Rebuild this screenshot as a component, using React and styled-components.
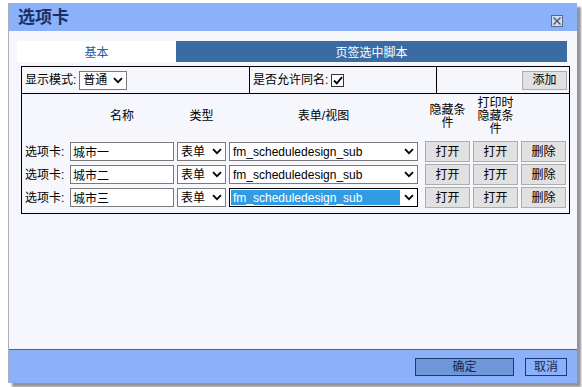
import React from "react";
import styled, { createGlobalStyle } from "styled-components";

const Global = createGlobalStyle`
  html, body { margin: 0; padding: 0; }
  body {
    background: #ffffff;
    font-family: "Liberation Sans", "Noto Sans CJK SC", sans-serif;
    font-size: 12px;
    color: #000;
  }
`;

const Page = styled.div`
  width: 582px;
  height: 387px;
  box-sizing: border-box;
  padding: 3px 0 0 8px;
  overflow: hidden;
`;

const Dialog = styled.div`
  width: 569px;
  height: 380px;
  display: flex;
  flex-direction: column;
  box-sizing: border-box;
  border-left: 1px solid #a9b0bc;
  box-shadow: 4px 4px 2px rgba(60, 60, 70, 0.55);
`;

const TitleBar = styled.div`
  height: 28px;
  flex: none;
  background: #8ab1f9;
  display: flex;
  align-items: center;
  justify-content: space-between;
  padding: 0 14px 0 9px;
`;

const Title = styled.div`
  font-family: "Noto Sans CJK SC", sans-serif;
  font-size: 17px;
  font-weight: 700;
  line-height: 20px;
  color: #1e2f62;
  margin-top: -2px;
`;

const CloseBox = styled.div`
  width: 10px;
  height: 10px;
  border: 1px solid #5d6a86;
  background: #cfdcf6;
  display: flex;
  align-items: center;
  justify-content: center;
  margin-top: 8px;
`;

const Body = styled.div`
  flex: 1;
  background: #f5f7fc;
  padding: 10px 0 0 8px;
`;

const Tabs = styled.div`
  display: flex;
  width: 550px;
  height: 21px;
`;

const Tab = styled.div`
  width: ${(p) => p.$w}px;
  flex: ${(p) => (p.$w ? "none" : "1")};
  background: ${(p) => (p.$active ? "#ffffff" : "#3a6ca3")};
  color: ${(p) => (p.$active ? "#2d5c9e" : "#ffffff")};
  display: flex;
  align-items: center;
  justify-content: center;
  line-height: 14px;
  font-family: "Noto Sans CJK SC", sans-serif;
`;

const Panel = styled.div`
  margin: 4px 0 0 4px;
  width: 549px;
  box-sizing: border-box;
  border: 1px solid #000;
`;

const TopRow = styled.div`
  display: grid;
  grid-template-columns: 228px 187px 1fr;
  height: 26px;
  border-bottom: 1px solid #000;
`;

const TopCell = styled.div`
  display: flex;
  align-items: center;
  justify-content: ${(p) => (p.$right ? "flex-end" : "flex-start")};
  padding: 0 ${(p) => (p.$right ? "2px" : "0")} 0 3px;
  border-right: ${(p) => (p.$last ? "none" : "1px solid #000")};
  line-height: 14px;
  gap: 3px;
`;

const Grid = styled.div`
  display: grid;
  grid-template-columns: 42px 104px 49px 189px 1px 45px 45px 45px;
  grid-template-rows: 45px repeat(3, 21px);
  column-gap: 3px;
  row-gap: 2px;
  padding: 0 0 5px 3px;
  align-items: center;
`;

const Head = styled.div`
  text-align: center;
  line-height: 13px;
  grid-column: ${(p) => p.$col};
`;

const Label = styled.div`
  line-height: 14px;
  white-space: nowrap;
`;

const TextInput = styled.input`
  box-sizing: border-box;
  width: 100%;
  height: 19px;
  border: 1px solid #7a7a7a;
  background: #fff;
  padding: 0 2px;
  font: inherit;
  font-size: 12px;
  outline: none;
`;

const SelectBox = styled.div`
  box-sizing: border-box;
  width: ${(p) => (p.$w ? `${p.$w}px` : "100%")};
  height: 19px;
  border: 1px solid ${(p) => (p.$focus ? "#000" : "#7a7a7a")};
  background: #fff;
  display: flex;
  align-items: center;
  padding: 1px 3px 1px 1px;
  gap: 4px;
`;

const SelectText = styled.div`
  flex: 1;
  height: 100%;
  display: flex;
  align-items: center;
  padding-left: 2px;
  white-space: nowrap;
  overflow: hidden;
  line-height: 14px;
  background: ${(p) => (p.$focus ? "#319be4" : "transparent")};
  color: ${(p) => (p.$focus ? "#fff" : "#000")};
`;

const GreyButton = styled.button`
  box-sizing: border-box;
  width: ${(p) => (p.$w ? `${p.$w}px` : "100%")};
  height: ${(p) => p.$h || 21}px;
  border: 1px solid #adadad;
  background: #e1e1e1;
  font: inherit;
  font-size: 12px;
  line-height: 14px;
  color: #000;
  padding: 0;
  cursor: pointer;
`;

const Check = styled.div`
  width: 11px;
  height: 11px;
  border: 1px solid #333;
  background: #fff;
  display: flex;
  align-items: center;
  justify-content: center;
`;

const Footer = styled.div`
  height: 33px;
  flex: none;
  border-top: 1px solid #44678f;
  background: #8ab1f9;
  display: flex;
  align-items: center;
  justify-content: flex-end;
  padding-right: 10px;
  gap: 11px;
`;

const FootButton = styled.button`
  box-sizing: border-box;
  width: ${(p) => p.$w}px;
  height: 18px;
  border: 1px solid #1e3a6e;
  background: ${(p) => (p.$primary ? "#6e98da" : "#8ab1f9")};
  color: #17264a;
  font: inherit;
  font-size: 12px;
  line-height: 14px;
  padding: 0;
  margin-top: 1px;
`;

const Chevron = () => (
  <svg width="10" height="7" viewBox="0 0 10 7">
    <path d="M1 1.2 L5 5.2 L9 1.2" fill="none" stroke="#000" strokeWidth="1.8" />
  </svg>
);

const Select = ({ value, w, focus }) => (
  <SelectBox $w={w} $focus={focus}>
    <SelectText $focus={focus}>{value}</SelectText>
    <Chevron />
  </SelectBox>
);

const rows = ["城市一", "城市二", "城市三"];

export default function App() {
  return (
    <>
      <Global />
      <Page>
        <Dialog>
          <TitleBar>
            <Title>选项卡</Title>
            <CloseBox>
              <svg width="8" height="8" viewBox="0 0 8 8">
                <path d="M0.5 0.5 L7.5 7.5 M7.5 0.5 L0.5 7.5" stroke="#4a4f5c" strokeWidth="1.3" />
              </svg>
            </CloseBox>
          </TitleBar>
          <Body>
            <Tabs>
              <Tab $active $w={159}>基本</Tab>
              <Tab>页签选中脚本</Tab>
            </Tabs>
            <Panel>
              <TopRow>
                <TopCell>
                  显示模式:
                  <Select value="普通" w={48} />
                </TopCell>
                <TopCell>
                  是否允许同名:
                  <Check>
                    <svg width="10" height="9" viewBox="0 0 10 9">
                      <path d="M1 4.5 L3.8 7.3 L9 1.2" fill="none" stroke="#000" strokeWidth="1.8" />
                    </svg>
                  </Check>
                </TopCell>
                <TopCell $right $last>
                  <GreyButton $w={45} $h={19}>添加</GreyButton>
                </TopCell>
              </TopRow>
              <Grid>
                <Head $col={2}>名称</Head>
                <Head $col={3}>类型</Head>
                <Head $col={4}>表单/视图</Head>
                <Head $col={6}>隐藏条件</Head>
                <Head $col={7}>打印时隐藏条件</Head>
                <Head $col={8} />
                {rows.map((name, i) => (
                  <React.Fragment key={name}>
                    <Label>选项卡:</Label>
                    <TextInput defaultValue={name} readOnly />
                    <Select value="表单" />
                    <Select value="fm_scheduledesign_sub" focus={i === 2} />
                    <span />
                    <GreyButton>打开</GreyButton>
                    <GreyButton>打开</GreyButton>
                    <GreyButton>删除</GreyButton>
                  </React.Fragment>
                ))}
              </Grid>
            </Panel>
          </Body>
          <Footer>
            <FootButton $primary $w={99}>确定</FootButton>
            <FootButton $w={42}>取消</FootButton>
          </Footer>
        </Dialog>
      </Page>
    </>
  );
}
